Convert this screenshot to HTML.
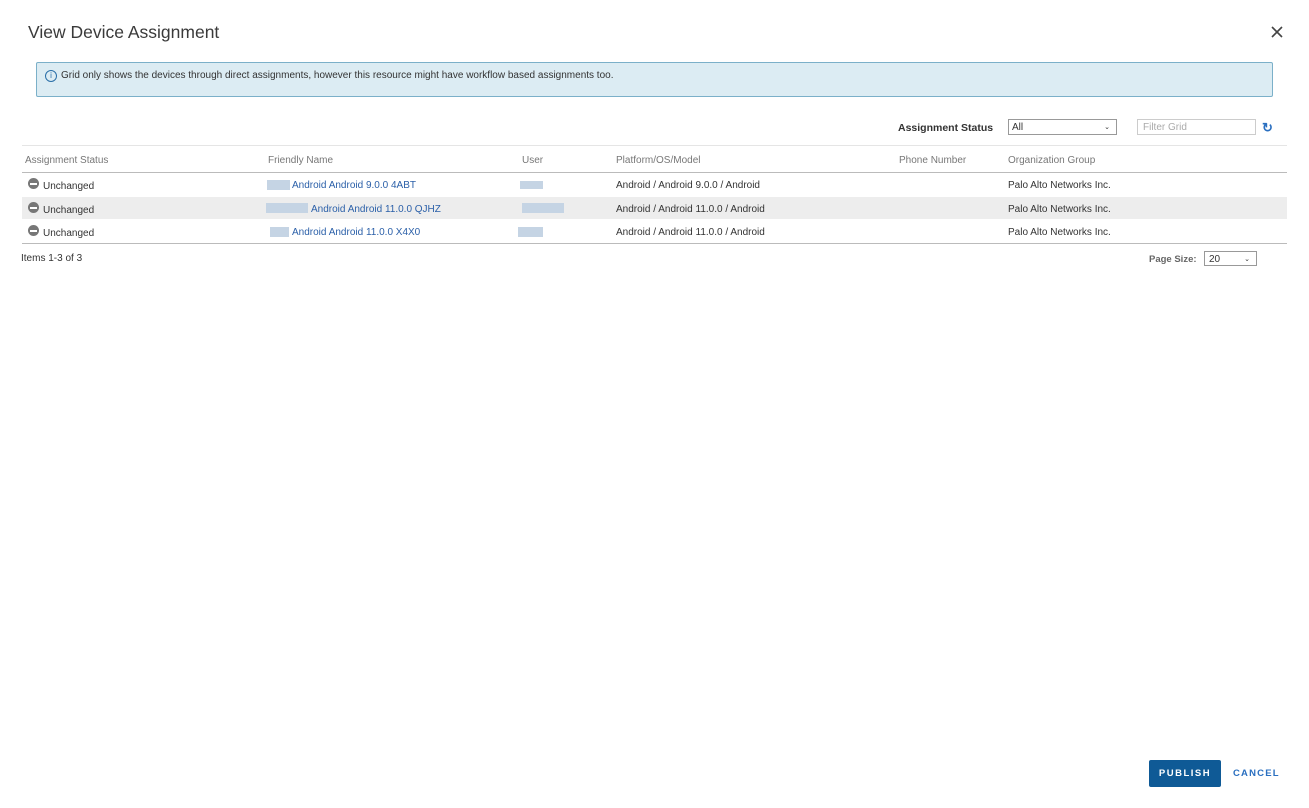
<!DOCTYPE html>
<html><head><style>
body{margin:0;width:1309px;height:808px;background:#fff;font-family:"Liberation Sans",sans-serif;position:relative;overflow:hidden;color:#333}
.a{position:absolute;white-space:nowrap}
.h{font-size:10px;color:#777}
.c{font-size:10px;color:#333}
.l{font-size:10px;color:#2a5fa8}
.blur{position:absolute;background:#c5d4e4}
.ic{position:absolute;width:11px;height:11px;border-radius:50%;background:#777}
.ic:after{content:"";position:absolute;left:2px;top:5px;width:7px;height:1.5px;background:#fff}
</style></head><body>
<div class="a" style="left:28px;top:22px;font-size:17.5px;color:#3a3a3a">View Device Assignment</div>
<svg class="a" style="left:1271px;top:26px" width="12" height="12" viewBox="0 0 12 12"><path d="M1 1L11 11M11 1L1 11" stroke="#444" stroke-width="1.6"/></svg>
<div class="a" style="left:36px;top:62px;width:1235px;height:33px;background:#dcecf3;border:1px solid #7bb0c9;border-radius:2px"></div>
<div class="a" style="left:45px;top:70px;width:10px;height:10px;border:1px solid #2a6fa8;border-radius:50%;font-size:8px;color:#2a6fa8;text-align:center;line-height:10px">i</div>
<div class="a" style="left:61px;top:70px;font-size:10px;color:#333">Grid only shows the devices through direct assignments, however this resource might have workflow based assignments too.</div>
<div class="a" style="left:898px;top:122px;font-size:10.5px;font-weight:bold;color:#333">Assignment Status</div>
<div class="a" style="left:1008px;top:119px;width:109px;height:16px;border:1px solid #999;font-size:10px;line-height:16px;padding-left:3px;box-sizing:border-box">All<span style="position:absolute;right:6px;font-size:7px">⌄</span></div>
<div class="a" style="left:1137px;top:119px;width:119px;height:16px;border:1px solid #ccc;font-size:10px;color:#aaa;line-height:15px;padding-left:5px;box-sizing:border-box">Filter Grid</div>
<div class="a" style="left:1262px;top:120px;font-size:13px;font-weight:bold;color:#2a6fc0">↻</div>
<div class="a" style="left:22px;top:145px;width:1265px;height:1px;background:#e5e5e5"></div>
<div class="a h" style="left:25px;top:155px">Assignment Status</div>
<div class="a h" style="left:268px;top:155px">Friendly Name</div>
<div class="a h" style="left:522px;top:155px">User</div>
<div class="a h" style="left:616px;top:155px">Platform/OS/Model</div>
<div class="a h" style="left:899px;top:155px">Phone Number</div>
<div class="a h" style="left:1008px;top:155px">Organization Group</div>
<div class="a" style="left:22px;top:172px;width:1265px;height:1px;background:#bbb"></div>
<div class="a" style="left:22px;top:197px;width:1265px;height:22px;background:#ededed"></div>
<div class="a" style="left:22px;top:243px;width:1265px;height:1px;background:#bbb"></div>

<div class="ic" style="left:28px;top:178px"></div><div class="a c" style="left:43px;top:181px">Unchanged</div>
<div class="blur" style="left:267px;top:180px;width:23px;height:10px"></div><div class="a l" style="left:292px;top:180px">Android Android 9.0.0 4ABT</div>
<div class="blur" style="left:520px;top:181px;width:23px;height:8px"></div>
<div class="a c" style="left:616px;top:180px">Android / Android 9.0.0 / Android</div>
<div class="a c" style="left:1008px;top:180px">Palo Alto Networks Inc.</div>

<div class="ic" style="left:28px;top:202px"></div><div class="a c" style="left:43px;top:205px">Unchanged</div>
<div class="blur" style="left:266px;top:203px;width:42px;height:10px"></div><div class="a l" style="left:311px;top:204px">Android Android 11.0.0 QJHZ</div>
<div class="blur" style="left:522px;top:203px;width:42px;height:10px"></div>
<div class="a c" style="left:616px;top:204px">Android / Android 11.0.0 / Android</div>
<div class="a c" style="left:1008px;top:204px">Palo Alto Networks Inc.</div>

<div class="ic" style="left:28px;top:225px"></div><div class="a c" style="left:43px;top:228px">Unchanged</div>
<div class="blur" style="left:270px;top:227px;width:19px;height:10px"></div><div class="a l" style="left:292px;top:227px">Android Android 11.0.0 X4X0</div>
<div class="blur" style="left:518px;top:227px;width:25px;height:10px"></div>
<div class="a c" style="left:616px;top:227px">Android / Android 11.0.0 / Android</div>
<div class="a c" style="left:1008px;top:227px">Palo Alto Networks Inc.</div>

<div class="a c" style="left:21px;top:253px">Items 1-3 of 3</div>
<div class="a" style="left:1149px;top:254px;font-size:9.5px;font-weight:bold;color:#666">Page Size:</div>
<div class="a" style="left:1204px;top:251px;width:53px;height:15px;border:1px solid #999;font-size:10px;line-height:15px;padding-left:4px;box-sizing:border-box">20<span style="position:absolute;right:6px;font-size:7px">⌄</span></div>

<div class="a" style="left:1149px;top:760px;width:72px;height:27px;background:#0f5a96;border-radius:2px;color:#fff;font-size:9.5px;font-weight:bold;letter-spacing:1.5px;text-align:center;line-height:27px">PUBLISH</div>
<div class="a" style="left:1233px;top:768px;font-size:9.5px;font-weight:bold;letter-spacing:1.2px;color:#2a6fc0">CANCEL</div>
</body></html>
